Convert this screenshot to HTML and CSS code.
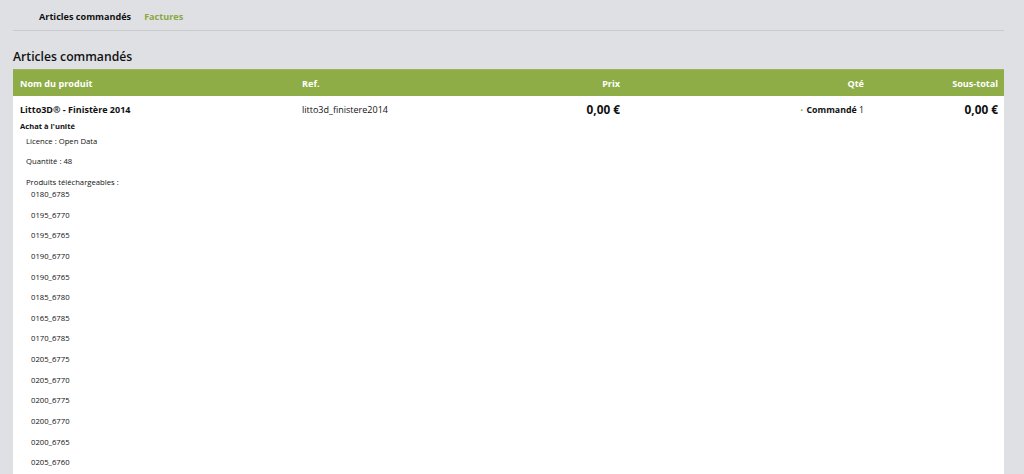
FILE: index.html
```html
<!DOCTYPE html>
<html lang="fr">
<head>
<meta charset="utf-8">
<title>Articles commandés</title>
<link rel="stylesheet" href="styles.css">
</head>
<body>
<div class="page">
  <nav class="tabs">
    <span class="tab active">Articles commandés</span>
    <span class="tab link">Factures</span>
  </nav>
  <h2 class="title">Articles commandés</h2>
  <table class="items">
    <colgroup>
      <col class="c1"><col class="c2"><col class="c3"><col class="c4"><col class="c5">
    </colgroup>
    <thead>
      <tr>
        <th class="left">Nom du produit</th>
        <th class="left">Ref.</th>
        <th class="right">Prix</th>
        <th class="right">Qté</th>
        <th class="right">Sous-total</th>
      </tr>
    </thead>
    <tbody>
      <tr>
        <td class="product">
          <div class="pname">Litto3D® - Finistère 2014</div>
          <div class="opt-title">Achat à l'unité</div>
          <div class="opt">Licence : Open Data</div>
          <div class="opt">Quantité : 48</div>
          <div class="opt opt-dl">Produits téléchargeables :</div>
          <ul class="tiles">
            <li>0180_6785</li>
            <li>0195_6770</li>
            <li>0195_6765</li>
            <li>0190_6770</li>
            <li>0190_6765</li>
            <li>0185_6780</li>
            <li>0165_6785</li>
            <li>0170_6785</li>
            <li>0205_6775</li>
            <li>0205_6770</li>
            <li>0200_6775</li>
            <li>0200_6770</li>
            <li>0200_6765</li>
            <li>0205_6760</li>
          </ul>
        </td>
        <td class="sku">litto3d_finistere2014</td>
        <td class="price right">0,00 €</td>
        <td class="qty right"><span class="dot">•</span> <b>Commandé</b> 1</td>
        <td class="price right">0,00 €</td>
      </tr>
    </tbody>
  </table>
</div>
</body>
</html>
```

FILE: styles.css
```css
html, body {
  margin: 0;
  padding: 0;
  background: #dfe0e4;
  font-family: "Open Sans", "Liberation Sans", sans-serif;
  color: #111;
}
.page {
  padding: 0 20px 0 13px;
}
.tabs {
  display: flex;
  gap: 13px;
  padding: 10px 0 0 26px;
  height: 20px;
  border-bottom: 1px solid #c9cacd;
  font-size: 9.1px;
  font-weight: 700;
  line-height: 14px;
}
.tab.active { color: #111; }
.tab.link { color: #8aa83f; }
.title {
  margin: 17px 0 3px;
  font-size: 12.2px;
  font-weight: 600;
  line-height: 18px;
  color: #111;
}
.items {
  width: 991px;
  border-collapse: collapse;
  table-layout: fixed;
  background: #fff;
  border-top: 1px solid #f0f1f3;
}
.c1 { width: 282px; }
.c2 { width: 166px; }
.c3 { width: 166px; }
.c4 { width: 244px; }
.c5 { width: 133px; }
.items th {
  background: #8ead46;
  color: #fff;
  font-size: 9.1px;
  font-weight: 700;
  height: 26px;
  padding: 0 7px;
  border-top: 1px solid #9cb55a;
}
.items th:last-child { padding-right: 6px; }
.left { text-align: left; }
.right { text-align: right; }
.items td {
  vertical-align: top;
  padding: 7px 7px 0;
  font-size: 9px;
  line-height: 13px;
  color: #111;
}
.items td:last-child { padding-right: 6px; }
.pname {
  font-weight: 700;
  font-size: 9px;
}
.opt-title {
  font-weight: 700;
  font-size: 7.6px;
  margin-top: 4px;
  line-height: 12px;
}
.opt {
  font-size: 7.7px;
  padding-left: 6px;
  line-height: 11px;
  margin-top: 9px;
}
.opt-title + .opt { margin-top: 4px; }
.opt.opt-dl { margin-top: 10px; }
.tiles {
  list-style: none;
  margin: 0;
  padding: 1px 0 0 11px;
}
.tiles li {
  font-size: 7.7px;
  line-height: 11px;
  margin-bottom: 9.65px;
}
.items td.sku { font-size: 9px; }
.items td.price {
  font-weight: 700;
  font-size: 11.8px;
  line-height: 13px;
}
.items td.qty { font-size: 8.8px; }
.qty .dot {
  color: #8ead46;
  font-size: 8px;
  margin-right: 1px;
}
```
